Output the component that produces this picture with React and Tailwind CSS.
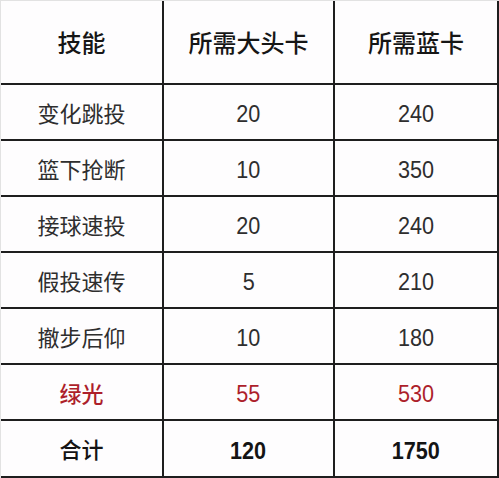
import React from 'react';

const rows = [
  { name: '变化跳投', head: '20', blue: '240' },
  { name: '篮下抢断', head: '10', blue: '350' },
  { name: '接球速投', head: '20', blue: '240' },
  { name: '假投速传', head: '5', blue: '210' },
  { name: '撤步后仰', head: '10', blue: '180' },
];

function Cell({ children, className = '' }) {
  return (
    <div className={`flex items-center justify-center border-r-2 border-b-2 border-[#1e1e1e] pt-1 ${className}`}>
      {children}
    </div>
  );
}

// digits in the source are narrower and taller than Arial's
function Num({ children }) {
  return <span className="inline-block text-[24px] scale-x-90">{children}</span>;
}

export default function App() {
  return (
    <div
      className="w-[499px] h-[478px] bg-[#fefdfe] border-t border-l border-[#e2e2e2] overflow-hidden"
      style={{ fontFamily: '"Liberation Sans", "Noto Sans CJK SC", sans-serif' }}
    >
      <div className="grid grid-cols-[163px_171px_164px] grid-rows-[84px_56px_56px_56px_56px_56px_56px_57px] h-full">
        {/* header */}
        <Cell className="text-[24px] font-medium text-[#161616]">技能</Cell>
        <Cell className="text-[24px] font-medium text-[#161616]">所需大头卡</Cell>
        <Cell className="text-[24px] font-medium text-[#161616]">所需蓝卡</Cell>

        {rows.map((r) => (
          <React.Fragment key={r.name}>
            <Cell className="text-[22px] text-[#2e2e2e]">{r.name}</Cell>
            <Cell className="text-[22px] text-[#2e2e2e]"><Num>{r.head}</Num></Cell>
            <Cell className="text-[22px] text-[#2e2e2e]"><Num>{r.blue}</Num></Cell>
          </React.Fragment>
        ))}

        {/* 绿光 */}
        <Cell className="text-[22px] font-medium text-[#ad1f2b]">绿光</Cell>
        <Cell className="text-[22px] font-medium text-[#ad1f2b]"><Num>55</Num></Cell>
        <Cell className="text-[22px] font-medium text-[#ad1f2b]"><Num>530</Num></Cell>

        {/* 合计 */}
        <Cell className="text-[22px] font-medium text-[#141414]">合计</Cell>
        <Cell className="text-[22px] font-bold text-[#141414]"><Num>120</Num></Cell>
        <Cell className="text-[22px] font-bold text-[#141414]"><Num>1750</Num></Cell>
      </div>
    </div>
  );
}
